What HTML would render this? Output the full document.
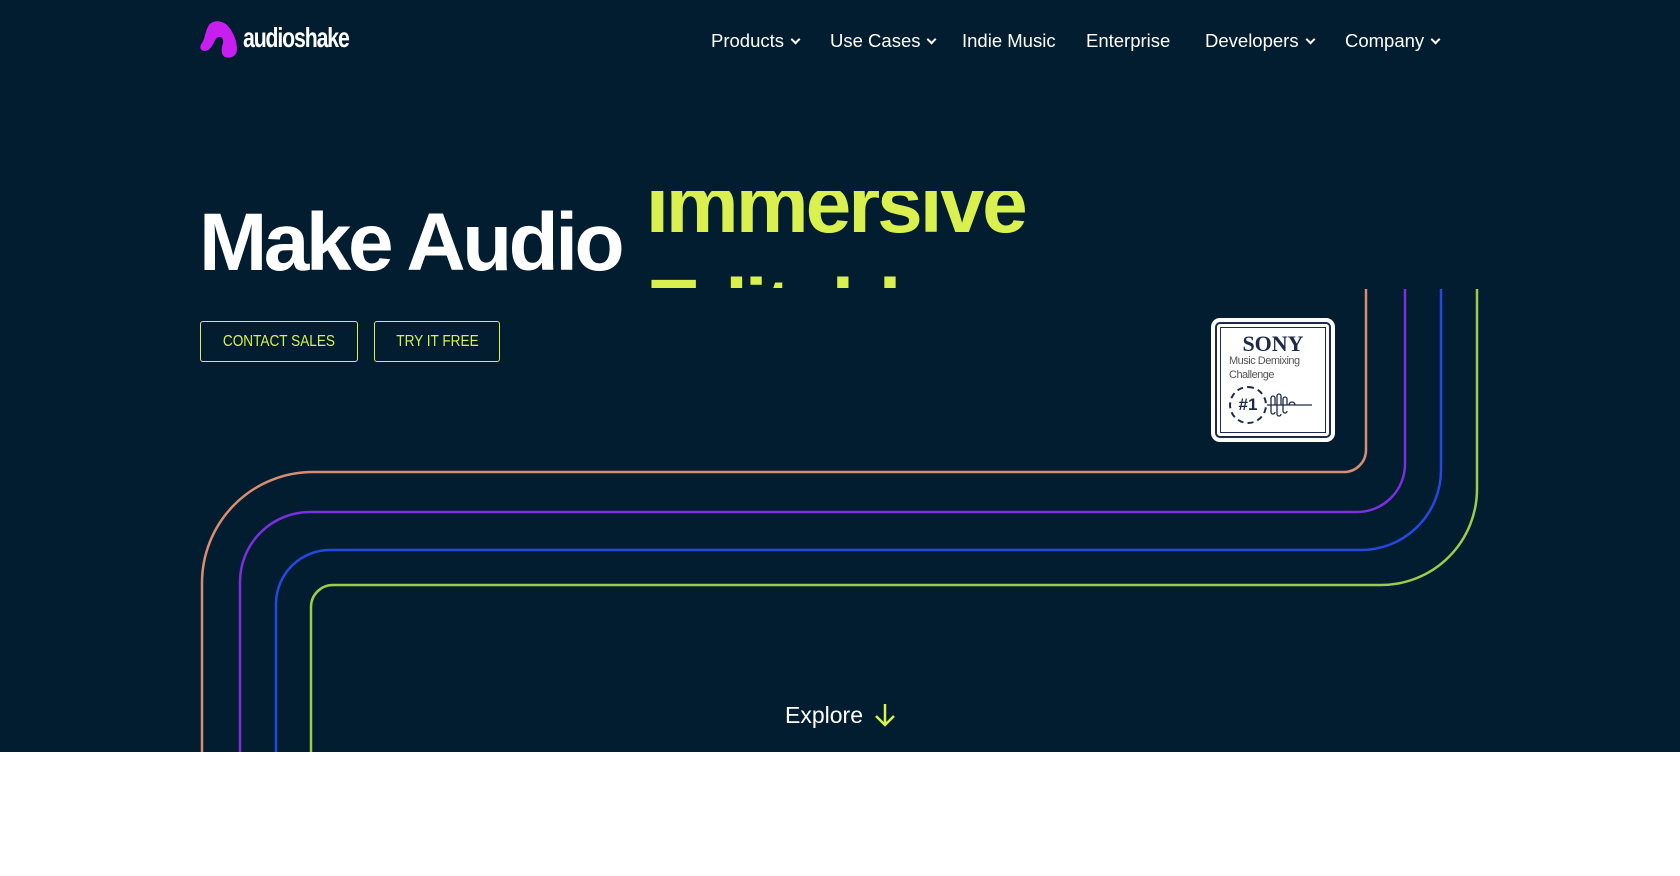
<!DOCTYPE html>
<html><head><meta charset="utf-8"><style>
*{margin:0;padding:0;box-sizing:border-box}
body{width:1680px;height:876px;background:#fff;font-family:"Liberation Sans",sans-serif;position:relative;overflow:hidden}
.hero{position:absolute;left:0;top:0;width:1680px;height:752px;background:#031d30}
.nav{position:absolute;top:30px;font-size:18.5px;color:#fff;white-space:nowrap}
.nav span{position:absolute;top:0}
.chev{display:inline-block;width:7px;height:7px;border-right:2px solid #fff;border-bottom:2px solid #fff;transform:rotate(45deg);margin-left:8px;position:relative;top:-4px}
h1{position:absolute;left:199px;top:193px;font-size:82px;font-weight:bold;color:#fff;letter-spacing:-3.5px;line-height:100px}
.clip{position:absolute;left:646px;top:191px;width:500px;height:97px;overflow:hidden}
.clip div{position:absolute;left:0;font-size:82px;font-weight:bold;color:#d9f04f;letter-spacing:-3px;line-height:100px}
.btn{position:absolute;top:321px;height:41px;border:1px solid #d9f04f;border-radius:3px;color:#d9f04f;font-size:16px;line-height:39px;text-align:center}
.btn span{display:inline-block;transform:scaleX(0.85)}
.sony{position:absolute;left:1211px;top:318px;width:124px;height:124px;background:#fff;border-radius:9px;padding:4px}
.sony .in{width:100%;height:100%;border:2px solid #1d2a4a;border-radius:5px;padding:3px}
.sony .in2{width:100%;height:100%;border:1px solid #1d2a4a;padding:6px 8px;color:#555}
</style></head><body>
<div class="hero">
<svg style="position:absolute;left:199px;top:21px" width="42" height="38" viewBox="0 0 42 38"><path d="M10 4 C14 -1 22 -1 28 4 C34 10 38 20 38 28 C38 35 32 38 26 36 C22 34 22 28 24 22 C25 16 20 14 17 18 C14 22 12 30 6 30 C1 30 0 26 3 22 C6 18 6 10 10 4Z" fill="#c81ff0"/></svg>
<div style="position:absolute;left:243px;top:22px;font-size:28px;font-weight:bold;color:#fff;letter-spacing:-1.5px;transform:scaleX(0.76);transform-origin:left">audioshake</div>
<div class="nav" style="left:0">
<span style="left:711px">Products<i class="chev"></i></span>
<span style="left:830px">Use Cases<i class="chev"></i></span>
<span style="left:962px">Indie Music</span>
<span style="left:1086px">Enterprise</span>
<span style="left:1205px">Developers<i class="chev"></i></span>
<span style="left:1345px">Company<i class="chev"></i></span>
</div>
<h1>Make Audio</h1>
<div class="clip"><div style="top:-36px">Immersive</div><div style="top:68px">Editable</div></div>
<div class="btn" style="left:200px;width:158px"><span>CONTACT SALES</span></div>
<div class="btn" style="left:374px;width:126px"><span>TRY IT FREE</span></div>
<svg style="position:absolute;left:0;top:0" width="1680" height="752" fill="none" stroke-width="2.5">
<path d="M1366 289 V450 a22 22 0 0 1 -22 22 H313 a111 111 0 0 0 -111 111 V752" stroke="#d98c72"/>
<path d="M1405 289 V464 a48 48 0 0 1 -48 48 H310 a70 70 0 0 0 -70 70 V752" stroke="#7a2fe0"/>
<path d="M1441 289 V470 a80 80 0 0 1 -80 80 H330 a54 54 0 0 0 -54 54 V752" stroke="#2448e0"/>
<path d="M1477 289 V489 a96 96 0 0 1 -96 96 H333 a22 22 0 0 0 -22 22 V752" stroke="#9ccc4a"/>
</svg>
<div class="sony"><div class="in"><div class="in2">
<div style="font-family:'Liberation Serif',serif;font-weight:bold;font-size:22px;color:#1d2a4a;line-height:20px;text-align:center">SONY</div>
<div style="font-size:11px;line-height:14px;letter-spacing:-0.5px">Music Demixing<br>Challenge</div>
<div style="margin-top:4px;display:flex;align-items:center"><div style="width:38px;height:38px;border:2px dashed #1d2a4a;border-radius:50%;font-size:17px;font-weight:bold;color:#1d2a4a;text-align:center;line-height:34px">#1</div>
<svg width="45" height="30" viewBox="0 0 45 30" fill="none" stroke="#1d2a4a" stroke-width="1.3"><path d="M0 15 H45 M4 15 V8 a2 2 0 0 1 4 0 V15 M10 15 V6 a2 2 0 0 1 4 0 V15 M16 15 V9 a2 2 0 0 1 4 0 V15 M4 15 V22 a2 2 0 0 0 4 0 M10 15 V24 a2 2 0 0 0 4 0 M16 15 V21 a2 2 0 0 0 4 0 M22 15 a3 3 0 0 1 6 0"/></svg></div>
</div></div></div>
<div style="position:absolute;left:785px;top:702px;font-size:23px;color:#fff">Explore</div>
<svg style="position:absolute;left:874px;top:703px" width="22" height="24" viewBox="0 0 22 24" fill="none" stroke="#d9f04f" stroke-width="2.5"><path d="M11 1 V22 M2 13 L11 22 L20 13"/></svg>
</div>
</body></html>
